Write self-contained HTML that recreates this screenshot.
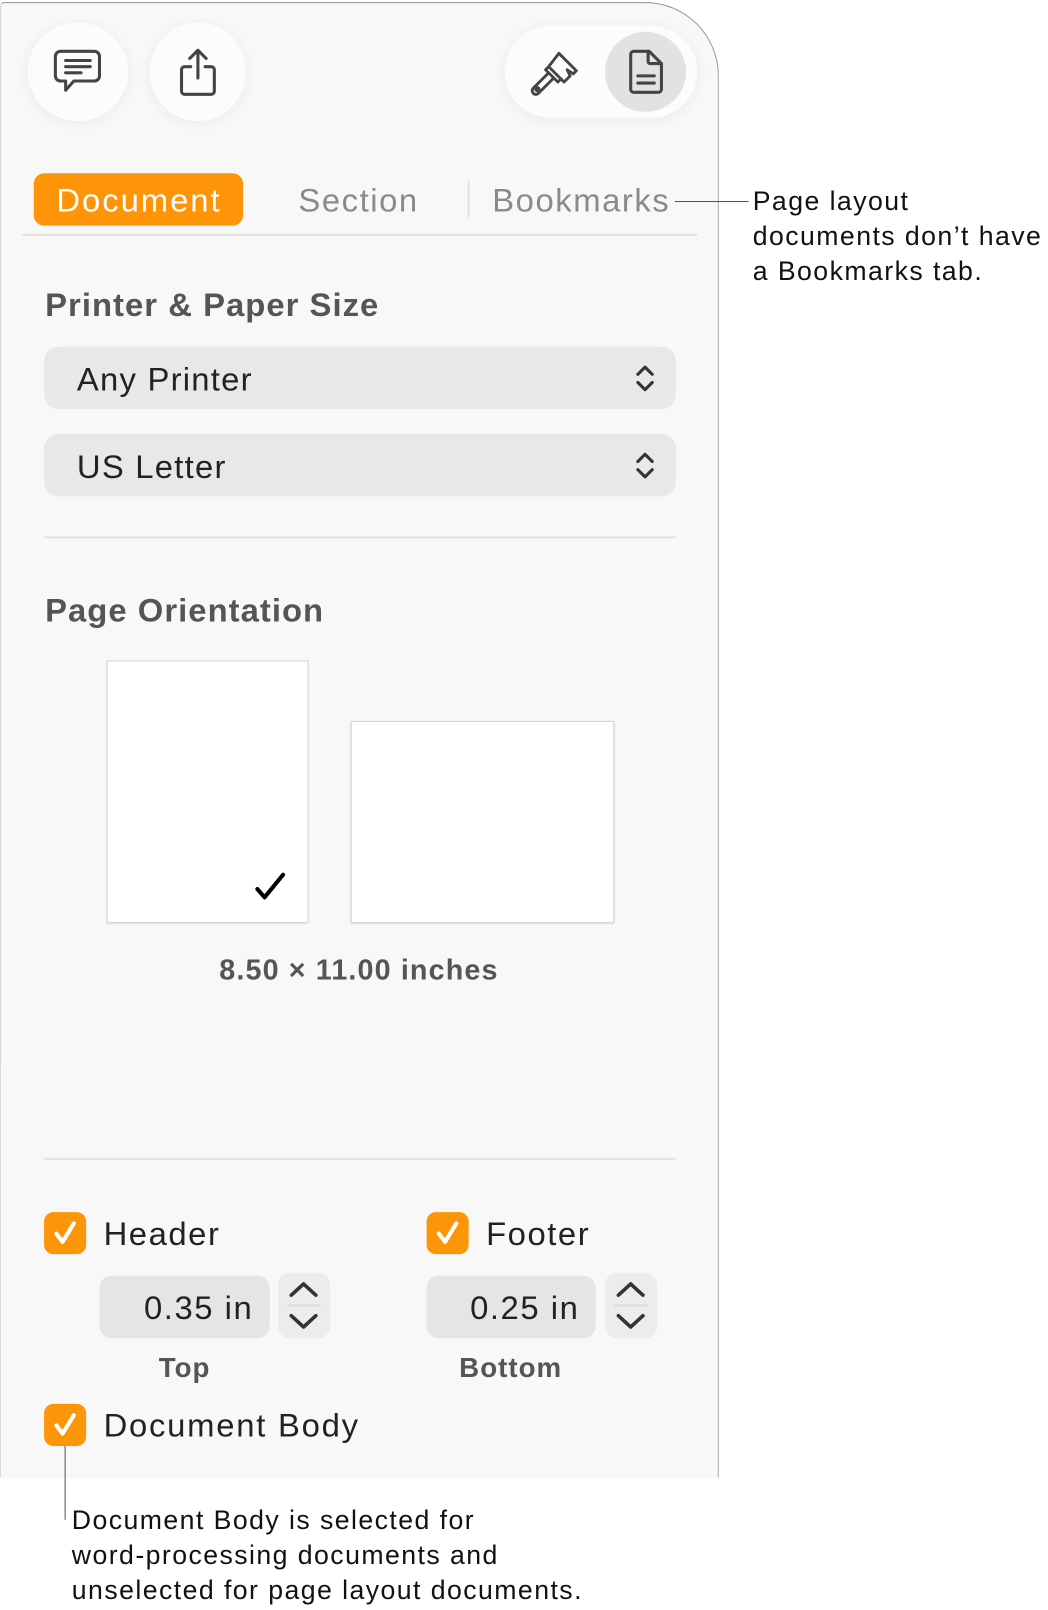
<!DOCTYPE html>
<html><head><meta charset="utf-8"><style>
html,body{margin:0;padding:0;background:#fff;width:1048px;height:1610px;overflow:hidden}
#w{position:absolute;left:0;top:0;width:1022px;height:1570px;transform:scale(1.0255);transform-origin:0 0;font-family:"Liberation Sans",sans-serif}
.a{position:absolute}
.panel{left:0;top:2px;width:699px;height:1438px;background:#f8f8f8;border:1px solid #9a9a9a;border-left-color:#d8d8d8;border-bottom:none;border-top-right-radius:72px;border-top-left-radius:4px}
.circ{border-radius:50%;background:#fcfcfc;box-shadow:0 2px 14px rgba(0,0,0,.06)}
.t{white-space:nowrap;line-height:1;letter-spacing:1.5px}
.b{letter-spacing:1px}
.pop{left:43px;width:616px;height:61px;border-radius:14px;background:#e8e8e8}
.pop span{position:absolute;left:32px;top:14px;font-size:32px;color:#222;letter-spacing:1.2px}
.pop svg{position:absolute;right:20px;top:16px}
.hr{height:2px;background:#e3e3e3}
.cb{width:41px;height:41px;border-radius:9px;background:#fd9508}
.cb svg{position:absolute;left:8px;top:8px}
.fld{height:61px;border-radius:12px;background:#e5e5e5;font-size:32px;color:#222}
.step{width:51px;height:64px;border-radius:12px;background:#ececec}
.note{font-size:26px;color:#111;line-height:34px;letter-spacing:1.4px}
</style></head><body><div id="w">
<div class="a panel"></div>

<div class="a circ" style="left:27px;top:22px;width:98px;height:96px"></div>
<svg class="a" style="left:51px;top:47px" width="50" height="48" viewBox="0 0 50 48" fill="none" stroke="#444" stroke-width="3" stroke-linejoin="round" stroke-linecap="round"><path d="M8 3h33a5 5 0 0 1 5 5v19a5 5 0 0 1-5 5H21l-8 9v-9H8a5 5 0 0 1-5-5V8a5 5 0 0 1 5-5z"/><path d="M13 12h24M13 18h24M13 24h15"/></svg>

<div class="a circ" style="left:146px;top:22px;width:94px;height:96px"></div>
<svg class="a" style="left:171px;top:46px" width="44" height="50" viewBox="0 0 44 50" fill="none" stroke="#444" stroke-width="3" stroke-linecap="round" stroke-linejoin="round"><path d="M22 3v27M14 11l8-8 8 8"/><path d="M15 19h-6a3 3 0 0 0-3 3v21a3 3 0 0 0 3 3h26a3 3 0 0 0 3-3V22a3 3 0 0 0-3-3h-6"/></svg>

<div class="a circ" style="left:492px;top:25px;width:188px;height:90px;border-radius:45px"></div>
<svg class="a" style="left:515px;top:45px" width="52" height="52" viewBox="0 0 52 52" fill="none" stroke="#444" stroke-width="2.8" stroke-linejoin="round" stroke-linecap="round"><path d="M30 7l17 17-3 3-6-4 3 6-6 6-15-15z"/><path d="M20 20l-3 3 12 12 3-3"/><path d="M19 27L5 41a3.5 3.5 0 0 0 5 5l14-14"/><circle cx="9" cy="42" r="1.6"/></svg>
<div class="a" style="left:590px;top:31px;width:79px;height:78px;border-radius:50%;background:#e2e2e2"></div>
<svg class="a" style="left:611px;top:47px" width="38" height="46" viewBox="0 0 38 46" fill="none" stroke="#444" stroke-width="3" stroke-linejoin="round" stroke-linecap="round"><path d="M7 3h15l12 12v25a3 3 0 0 1-3 3H7a3 3 0 0 1-3-3V6a3 3 0 0 1 3-3z"/><path d="M21 3v10a2 2 0 0 0 2 2h11"/><path d="M11 27h16M11 34h16"/></svg>

<div class="a" style="left:33px;top:169px;width:204px;height:51px;border-radius:10px;background:#fe9407"></div>
<div class="a t" style="left:55px;top:179px;font-size:32px;color:#fff;letter-spacing:1.9px">Document</div>
<div class="a t" style="left:291px;top:179px;font-size:32px;color:#8a8a8a">Section</div>
<div class="a" style="left:456px;top:176px;width:2px;height:36px;background:#e3e3e3"></div>
<div class="a t" style="left:480px;top:179px;font-size:32px;color:#8a8a8a">Bookmarks</div>
<div class="a hr" style="left:22px;top:228px;width:658px"></div>
<div class="a" style="left:658px;top:196px;width:72px;height:1px;background:#555"></div>
<div class="a note t" style="left:734px;top:179px;letter-spacing:1.4px">Page layout<br>documents don’t have<br>a Bookmarks tab.</div>

<div class="a t b" style="left:44px;top:281px;font-size:32px;font-weight:bold;color:#555">Printer &amp; Paper Size</div>
<div class="a pop" style="top:338px"><span>Any Printer</span><svg width="20" height="30" viewBox="0 0 20 30" fill="none" stroke="#333" stroke-width="3" stroke-linecap="round" stroke-linejoin="round"><path d="M3 11l7-7 7 7M3 19l7 7 7-7"/></svg></div>
<div class="a pop" style="top:423px"><span>US Letter</span><svg width="20" height="30" viewBox="0 0 20 30" fill="none" stroke="#333" stroke-width="3" stroke-linecap="round" stroke-linejoin="round"><path d="M3 11l7-7 7 7M3 19l7 7 7-7"/></svg></div>
<div class="a hr" style="left:43px;top:523px;width:616px"></div>

<div class="a t b" style="left:44px;top:579px;font-size:32px;font-weight:bold;color:#555">Page Orientation</div>
<div class="a" style="left:104px;top:644px;width:195px;height:254px;background:#fff;border:1px solid #d4d4d4;box-shadow:0 1px 2px rgba(0,0,0,.15)"></div>
<svg class="a" style="left:248px;top:850px" width="32" height="30" viewBox="0 0 32 30" fill="none" stroke="#000" stroke-width="4" stroke-linecap="round" stroke-linejoin="round"><path d="M3 17l7 8L28 3"/></svg>
<div class="a" style="left:342px;top:703px;width:255px;height:195px;background:#fff;border:1px solid #d4d4d4;box-shadow:0 1px 2px rgba(0,0,0,.15)"></div>
<div class="a t b" style="left:0;width:700px;text-align:center;top:932px;font-size:28px;font-weight:bold;color:#555;letter-spacing:1.1px">8.50 × 11.00 inches</div>
<div class="a hr" style="left:43px;top:1129px;width:616px"></div>

<div class="a cb" style="left:43px;top:1182px"><svg width="25" height="25" viewBox="0 0 25 25" fill="none" stroke="#fff" stroke-width="4" stroke-linecap="round" stroke-linejoin="round"><path d="M4 13l6 8L21 3"/></svg></div>
<div class="a t" style="left:101px;top:1187px;font-size:32px;color:#222">Header</div>
<div class="a cb" style="left:416px;top:1182px"><svg width="25" height="25" viewBox="0 0 25 25" fill="none" stroke="#fff" stroke-width="4" stroke-linecap="round" stroke-linejoin="round"><path d="M4 13l6 8L21 3"/></svg></div>
<div class="a t" style="left:474px;top:1187px;font-size:32px;color:#222">Footer</div>

<div class="a fld" style="left:97px;top:1244px;width:166px"><span class="a t" style="right:16px;top:15px">0.35 in</span></div>
<div class="a step" style="left:271px;top:1241px"><svg width="51" height="64" viewBox="0 0 51 64" fill="none" stroke="#333" stroke-width="3.5" stroke-linecap="round" stroke-linejoin="round"><path d="M13 22l12-11 12 11M13 42l12 11 12-11"/><path d="M10 32h31" stroke="#ddd" stroke-width="2"/></svg></div>
<div class="a fld" style="left:416px;top:1244px;width:165px"><span class="a t" style="right:16px;top:15px">0.25 in</span></div>
<div class="a step" style="left:590px;top:1241px"><svg width="51" height="64" viewBox="0 0 51 64" fill="none" stroke="#333" stroke-width="3.5" stroke-linecap="round" stroke-linejoin="round"><path d="M13 22l12-11 12 11M13 42l12 11 12-11"/><path d="M10 32h31" stroke="#ddd" stroke-width="2"/></svg></div>
<div class="a t b" style="left:100px;width:160px;text-align:center;top:1321px;font-size:27px;font-weight:bold;color:#555">Top</div>
<div class="a t b" style="left:418px;width:160px;text-align:center;top:1321px;font-size:27px;font-weight:bold;color:#555">Bottom</div>

<div class="a cb" style="left:43px;top:1369px"><svg width="25" height="25" viewBox="0 0 25 25" fill="none" stroke="#fff" stroke-width="4" stroke-linecap="round" stroke-linejoin="round"><path d="M4 13l6 8L21 3"/></svg></div>
<div class="a t" style="left:101px;top:1374px;font-size:32px;color:#222;letter-spacing:1.7px">Document Body</div>
<div class="a" style="left:63px;top:1410px;width:1px;height:72px;background:#555"></div>
<div class="a note t" style="left:70px;top:1465px">Document Body is selected for<br>word-processing documents and<br>unselected for page layout documents.</div>
</div></body></html>
